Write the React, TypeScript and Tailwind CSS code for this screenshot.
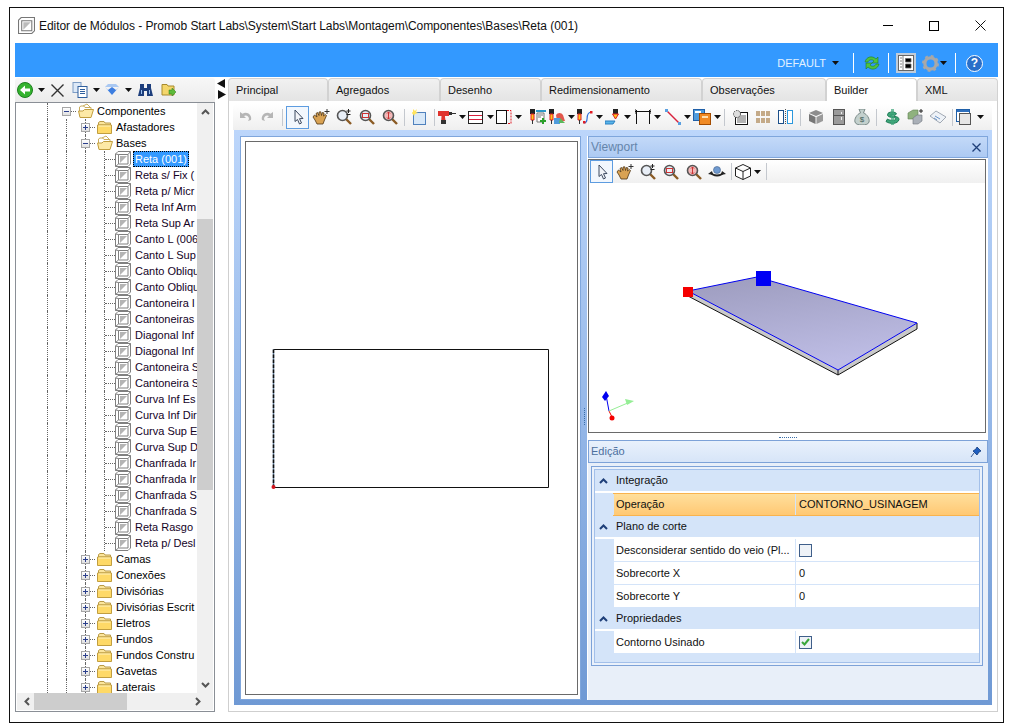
import type { ReactNode } from "react";

const font = { fontFamily: '"Liberation Sans", Arial, sans-serif' };

function Ic({ children, box = "0 0 16 16", className = "h-4 w-4" }: { children: ReactNode; box?: string; className?: string }) {
  return (
    <svg viewBox={box} className={`${className} shrink-0`} fill="none">
      {children}
    </svg>
  );
}

function Caret({ color = "#111" }: { color?: string }) {
  return (
    <svg viewBox="0 0 7 4" className="h-1 w-[7px] shrink-0">
      <path d="M0 0H7L3.5 4Z" fill={color} />
    </svg>
  );
}

function ModuleIcon() {
  return (
    <Ic>
      <path d="M.5 3 3 .5H15.5V13L13 15.5H.5Z" fill="#fff" stroke="#808080" />
      <path d="M3.5 3.5H13V13H3.5Z" fill="#fff" stroke="#808080" />
      <path d="M5 12V5H12Z" fill="#b4b4b4" />
      <path d="M.5 3 3.5 3.5M15.5.5 13 3.5M.5 15.5 3.5 13" stroke="#808080" />
    </Ic>
  );
}

function FolderClosed() {
  return (
    <Ic>
      <path d="M1.5 5V3.5L3 2.5H7L8 4H13.5V6H1.5Z" fill="#fbe59c" stroke="#b99a46" />
      <path d="M.5 6H14.5V14.5H.5Z" fill="#fed967" stroke="#c19e40" />
      <path d="M1.5 7H13.5" stroke="#fff3c0" />
    </Ic>
  );
}

function FolderOpen() {
  return (
    <Ic>
      <path d="M1.5 13V4L3 3H6L7 4.5H13V13Z" fill="#fff" stroke="#c9ac5c" />
      <path d="M5 3 9 1 12 4" stroke="#c9ac5c" fill="#fff" />
      <path d="M.5 8H5L6.5 6.5H15.5L13 14.5H2Z" fill="#fde9a6" stroke="#c19e40" />
    </Ic>
  );
}

function Magnifier({ children, r = "#e8eef6" }: { children?: ReactNode; r?: string }) {
  return (
    <Ic>
      <path d="M10 10 15 15" stroke="#8a5a24" strokeWidth="2.4" />
      <circle cx="6.5" cy="6.5" r="5" fill={r} stroke="#555" strokeWidth="1.6" />
      {children}
    </Ic>
  );
}

function Hand() {
  return (
    <Ic box="0 0 18 16" className="h-4 w-[18px]">
      <path
        d="M1 8 2.5 6 5 8 4 4.5 5.5 3.5 7 6.5 7 3 8.8 2.8 9.5 6.5 10.3 3.5 12 4 11.5 7 13.2 5.5 14.5 6.5 12.5 11 11 15H5L3 11Z"
        fill="#d9a253"
        stroke="#4d3413"
        strokeWidth=".8"
      />
      <path d="M15 0V5M12.5 2.5H17.5" stroke="#333" />
    </Ic>
  );
}

function Cursor() {
  return (
    <Ic>
      <path d="M5 1V12.5L7.5 10.5 9.5 15 11.5 14 9.5 9.7 13 9.5Z" fill="#f2f4f8" stroke="#3d4a60" />
    </Ic>
  );
}

function MachineHead({ x = 1 }: { x?: number }) {
  return (
    <>
      <rect x={x} y="0" width="5" height="5" fill="#222" />
      <path d={`M${x + 1} 5H${x + 4}V11H${x + 1}Z`} fill="#ffc61a" stroke="#e01b24" />
      <path d={`M${x + 2} 11H${x + 3}V15H${x + 2}Z`} fill="#333" />
    </>
  );
}

// ferramentas do builder, uma por botao
const builderIcons = {
  undo: (
    <Ic>
      <path d="M3 3V9H9L7 7C9 5.5 12 7 12 10L11 12 14 11C15.5 6 10 2 5.5 4.7Z" fill="#b6b6b6" />
    </Ic>
  ),
  redo: (
    <Ic>
      <path d="M13 3V9H7L9 7C7 5.5 4 7 4 10L5 12 2 11C.5 6 6 2 10.5 4.7Z" fill="#b6b6b6" />
    </Ic>
  ),
  zoomPlus: (
    <Magnifier>
      <path d="M12.500 0V4M10.500 2H14.500M10.500 5.500H14.500" stroke="#222" />
    </Magnifier>
  ),
  zoomWin: (
    <Magnifier>
      <rect x="3.5" y="4.5" width="6" height="4" stroke="#c33" />
    </Magnifier>
  ),
  zoomAll: (
    <Magnifier r="#f2b9b9">
      <path d="M6.5 3V10M5 4.5 6.5 3 8 4.5M5 8.5 6.5 10 8 8.5" stroke="#c33" />
    </Magnifier>
  ),
  sheet: (
    <Ic>
      <rect x="1.5" y="3.5" width="12" height="12" fill="#d8e8f8" stroke="#4f81bd" />
      <path d="M1 0 3 2 5 0 4 3 6 4 3 5 2 7 1 5-1 4 1 3Z" fill="#ffe45c" />
    </Ic>
  ),
  drill: (
    <Ic box="0 0 18 16" className="h-4 w-[18px]">
      <path d="M0 2H11V7H7V8L8 15H3L3.5 7H0Z" fill="#e0332d" />
      <path d="M3 11H8V15H3Z" fill="#333" />
      <path d="M11 3H14V6H11ZM14 4H18V5H14Z" fill="#333" />
    </Ic>
  ),
  strips: (
    <Ic>
      <rect x=".5" y="2.5" width="14" height="12" fill="#fff" stroke="#222" />
      <path d="M1 6.5H14M1 10.5H14" stroke="#d8203c" />
    </Ic>
  ),
  panel: (
    <Ic>
      <rect x=".5" y="1.5" width="10" height="13" fill="#fff" stroke="#111" />
      <path d="M11 1.5H15V14.5H11" stroke="#e01b24" strokeDasharray="2 1" />
    </Ic>
  ),
  headList: (
    <Ic>
      <MachineHead x={0} />
      <path d="M6 1H16V3H6Z" fill="#2a97c8" />
      <path d="M7 4H14V13H7Z" fill="#fff" stroke="#777" />
      <path d="M8 6H13M8 8H11" stroke="#777" />
      <path d="M12 9H14V11H16V13H14V15H12V13H10V11H12Z" fill="#2aa02a" />
    </Ic>
  ),
  headShape: (
    <Ic>
      <MachineHead x={0} />
      <path d="M7 6A4 4 0 0 1 14 6L16 12H8Z" fill="#e2574c" />
      <path d="M5 9H11V15H5Z" fill="#4f9bdc" />
      <path d="M11 9 16 14H10Z" fill="#5cb85c" />
    </Ic>
  ),
  headCurve: (
    <Ic>
      <MachineHead x={0} />
      <path d="M7 14C13 14 7 4 14 3" stroke="#2f6fdb" strokeWidth="1.2" />
      <rect x="6" y="12" width="2.5" height="2.5" fill="#e01b24" />
      <rect x="13" y="2" width="2.5" height="2.5" fill="#e01b24" />
    </Ic>
  ),
  headFlat: (
    <Ic>
      <rect x="8" y="0" width="5" height="5" fill="#222" />
      <path d="M7.5 5H13.5L10.5 10Z" fill="#ffc61a" stroke="#e01b24" />
      <path d="M0 12H10L8 15H0Z" fill="#59b5ea" stroke="#2a7fc0" />
    </Ic>
  ),
  bracket: (
    <Ic>
      <path d="M1.5 15V1M14.5 15V1M0 2.5H16" stroke="#111" />
      <path d="M0 0V5M16 0V5" stroke="#111" />
    </Ic>
  ),
  line: (
    <Ic>
      <path d="M2 2 14 14" stroke="#d8203c" strokeWidth="1.4" />
      <rect x="0" y="0" width="3" height="3" fill="#5a9fe0" />
      <rect x="13" y="13" width="3" height="3" fill="#5a9fe0" />
    </Ic>
  ),
  layers: (
    <Ic box="0 0 18 16" className="h-4 w-[18px]">
      <rect x=".5" y=".5" width="11" height="11" fill="#4f9bdc" stroke="#1f5fa8" />
      <rect x="2" y="2" width="6" height="2" fill="#fff" />
      <rect x="6.5" y="4.5" width="11" height="11" fill="#f08a24" stroke="#a34c00" />
      <rect x="9" y="7" width="6" height="2" fill="#ffe0b0" />
    </Ic>
  ),
  gearSheet: (
    <Ic>
      <rect x="3.5" y="3.5" width="12" height="12" fill="#fff" stroke="#111" />
      <path d="M5 7H14M5 9H14M5 11H14M5 13H14" stroke="#666" />
      <circle cx="5" cy="5" r="3.5" fill="#ddd" stroke="#444" strokeDasharray="1.5 1" />
    </Ic>
  ),
  bricks: (
    <Ic>
      <path d="M1 2H5V7H1ZM6 2H10V7H6ZM11 2H15V7H11ZM1 9H5V14H1ZM6 9H10V14H6ZM11 9H15V14H11Z" fill="#c4aa88" />
    </Ic>
  ),
  bars: (
    <Ic>
      <rect x=".5" y="1.5" width="5" height="13" fill="#fff" stroke="#1b4f8a" />
      <rect x="9.5" y="1.5" width="5" height="13" fill="#fff" stroke="#2a97dc" />
      <path d="M7.5 0V16" stroke="#555" strokeDasharray="1 1" />
    </Ic>
  ),
  box: (
    <Ic>
      <path d="M8 1 15 4 8 7 1 4Z" fill="#8d8d8d" />
      <path d="M1 5 7.5 8V15L1 12Z" fill="#777" />
      <path d="M15 5 8.5 8V15L15 12Z" fill="#9a9a9a" />
    </Ic>
  ),
  fridge: (
    <Ic>
      <rect x="2.5" y=".5" width="11" height="15" fill="#9b9b9b" stroke="#555" />
      <path d="M3 6.5H13" stroke="#555" />
      <path d="M10.5 3V5M10.5 8V11" stroke="#eee" />
    </Ic>
  ),
  bag: (
    <Ic>
      <path d="M5 0H11L9.5 4C13 5 16 10 15 13 14.5 15 12 16 8 16S1.500 15 1 13C0 10 3 5 6.500 4Z" fill="#c3d0cd" stroke="#7a8a88" />
      <text x="8" y="13" textAnchor="middle" fontSize="8" fill="#44605a" style={font}>
        $
      </text>
    </Ic>
  ),
  dollar: (
    <Ic>
      <path
        d="M12.500 5C12 2.500 4 2 3.500 5.500 3 9.500 12 7.500 12 10 11 12 5 11.500 3.500 10L2 12.500C5 15 14 15.500 15 10.500 15.500 6.500 6.500 8 7 5.800 8 5 10 5.500 10.500 6.500Z"
        fill="#3ea67a"
        stroke="#1d7a54"
      />
      <path d="M7 0H10V16H7Z" fill="#3ea67a" opacity=".7" />
    </Ic>
  ),
  blocks: (
    <Ic>
      <path d="M1 4 6 1H11V7L6 10H1Z" fill="#8fb27e" stroke="#5f7f52" strokeWidth=".6" />
      <path d="M6 9 10 6H15V12L11 15H6Z" fill="#aab0b8" stroke="#70767d" strokeWidth=".6" />
      <path d="M14 0V4M12 2H16" stroke="#222" />
    </Ic>
  ),
  tag: (
    <Ic>
      <path d="M0 7 6 2 16 8 10 14Z" fill="#eef2f7" stroke="#a0a8b3" />
      <path d="M5 7 10 10M4 9 7 11" stroke="#6a94c8" />
    </Ic>
  ),
  windows: (
    <Ic box="0 0 18 16" className="h-4 w-[18px]">
      <rect x=".5" y=".5" width="13" height="12" fill="#fff" stroke="#1f5fa8" />
      <rect x="1" y="1" width="12" height="2" fill="#2d6fbd" />
      <rect x="3.500" y="4.500" width="11" height="11" fill="#e6e6e6" stroke="#555" />
    </Ic>
  ),
  orbit: (
    <Ic box="0 0 18 16" className="h-4 w-[18px]">
      <circle cx="9" cy="6" r="3.500" fill="#6f9ad0" stroke="#3f5f8a" strokeWidth=".6" />
      <path d="M3 8.500C5 12.500 13 12.500 15 8.500" stroke="#222" strokeWidth="1.800" />
      <path d="M0 10 4 7 5 11ZM18 10 14 7 13 11Z" fill="#222" />
    </Ic>
  ),
  cube: (
    <Ic>
      <path d="M8 .5 15.500 4V12L8 15.500 .5 12V4ZM.5 4 8 7.500 15.500 4M8 7.500V15.500" fill="#fff" stroke="#222" />
    </Ic>
  ),
};

function Tool({ icon, w = "w-[23px]", caret, active }: { icon: ReactNode; w?: string; caret?: boolean; active?: boolean }) {
  return (
    <div
      className={`${w} flex h-[23px] shrink-0 items-center ${caret ? "gap-[3px]" : "justify-center"} ${
        active ? "border border-[#5d9ce0] bg-[#f2f7fd]" : ""
      }`}
    >
      {icon}
      {caret && <Caret />}
    </div>
  );
}

function Sep() {
  return (
    <div className="flex h-[23px] w-[7px] shrink-0 justify-center">
      <div className="my-[3px] w-px bg-[#c4c8ce]" />
    </div>
  );
}

function TitleBar() {
  return (
    <div className="flex h-[35px] items-center bg-white pl-[3px]">
      <Ic className="h-[17px] w-[17px]">
        <path d="M.5 3 3 .5H15.500V13L13 15.500H.5Z" fill="#fff" stroke="#777" />
        <path d="M3.500 3.500H13V13H3.500Z" fill="#fff" stroke="#777" />
        <path d="M5 12V5H12Z" fill="#bbb" />
      </Ic>
      <span className="ml-[4px] text-[12px] tracking-[-0.05px] text-[#111]">
        Editor de Módulos - Promob Start Labs\System\Start Labs\Montagem\Componentes\Bases\Reta (001)
      </span>
      <div className="ml-auto mr-[-5px] flex items-center">
        <div className="flex w-[46px] justify-center">
          <div className="h-px w-[10px] bg-black" />
        </div>
        <div className="flex w-[46px] justify-center">
          <div className="h-[10px] w-[10px] border border-black" />
        </div>
        <div className="flex w-[46px] justify-center">
          <svg viewBox="0 0 11 11" className="h-[11px] w-[11px]">
            <path d="M.5.5 10.500 10.500M10.500.5.5 10.500" stroke="#111" />
          </svg>
        </div>
      </div>
    </div>
  );
}

function BlueBar() {
  return (
    <div className="flex h-[34px] items-center justify-end bg-[#3399ff] pt-[6px]">
      <span className="text-[11px] text-[#e3f1ff]">DEFAULT</span>
      <div className="ml-[6px]">
        <Caret />
      </div>
      <div className="ml-[14px] h-[20px] w-px bg-white" />
      <div className="ml-[9px] w-[18px]">
        <svg viewBox="0 0 18 18" className="h-[18px] w-[18px]">
          <path d="M2 8C3 3 9 1 13 5L15 3V9H9L11 7C9 5 6 5.500 5 8Z" fill="#4fc13f" stroke="#1f7d2a" strokeWidth=".6" />
          <path d="M16 10C15 15 9 17 5 13L3 15V9H9L7 11C9 13 12 12.500 13 10Z" fill="#4fc13f" stroke="#1f7d2a" strokeWidth=".6" />
        </svg>
      </div>
      <div className="ml-[7px] h-[20px] w-px bg-white" />
      <div className="ml-[7px] flex h-[20px] w-[20px] items-center justify-center bg-[#c0ccd9]">
        <svg viewBox="0 0 16 16" className="h-4 w-4">
          <rect x=".5" y=".5" width="15" height="15" fill="#fff" stroke="#666" />
          <path d="M5 .5V15.500M7.500 3.500H13V7H7.500ZM7.500 9H13V13H7.500ZM2 3H4M2 6H4M2 9H4M2 12H4" stroke="#666" strokeWidth=".8" />
        </svg>
      </div>
      <div className="ml-[6px] flex items-center gap-px">
        <svg viewBox="0 0 18 18" className="h-[17px] w-[17px]">
          <circle cx="9" cy="9" r="6" fill="none" stroke="#a8a8a8" strokeWidth="3.500" />
          <circle cx="9" cy="9" r="8" fill="none" stroke="#a8a8a8" strokeWidth="2" strokeDasharray="3 3.300" />
        </svg>
        <Caret />
      </div>
      <div className="ml-[8px] h-[20px] w-px bg-white" />
      <div className="ml-[10px] mr-[15px] flex h-[17px] w-[17px] items-center justify-center rounded-full border border-white bg-[#2a6fc9] text-[12px] font-bold leading-none text-white">
        ?
      </div>
    </div>
  );
}

function TreeToolbar() {
  return (
    <div className="flex h-[24px] items-center rounded-t-[3px] bg-gradient-to-b from-[#f7f7f7] to-[#ececec] pl-[2px]">
      <svg viewBox="0 0 16 16" className="h-4 w-4 shrink-0">
        <circle cx="8" cy="8" r="7.500" fill="#35b32f" stroke="#1d7f1f" />
        <path d="M3 8 8 3.500V6.500H13V9.500H8V12.500Z" fill="#fff" />
      </svg>
      <div className="ml-[5px]">
        <Caret />
      </div>
      <svg viewBox="0 0 13 13" className="ml-[6px] h-[13px] w-[13px] shrink-0">
        <path d="M.5.5 12.500 12.500M12.500.5.5 12.500" stroke="#333" strokeWidth="1.400" />
      </svg>
      <svg viewBox="0 0 16 16" className="ml-[8px] h-4 w-4 shrink-0">
        <rect x="1" y=".5" width="8" height="10" fill="#dde9f7" stroke="#7d9cc4" />
        <rect x="6" y="4.500" width="9" height="11" fill="#fff" stroke="#2f5f9e" />
        <path d="M8 7.500H13M8 9.500H13M8 11.500H13" stroke="#2f5f9e" />
      </svg>
      <div className="ml-[5px]">
        <Caret />
      </div>
      <svg viewBox="0 0 14 12" className="ml-[5px] h-[12px] w-[14px] shrink-0">
        <path d="M0 3 3 6 7 3 11 6 14 3 7 11Z" fill="#3d7ee0" />
        <path d="M3 0H11L14 3H0Z" fill="#a9c8f2" />
      </svg>
      <div className="ml-[6px]">
        <Caret />
      </div>
      <svg viewBox="0 0 15 14" className="ml-[6px] h-[14px] w-[15px] shrink-0">
        <path d="M2 1H6V5H9V1H13V5L15 13H9V8H6V13H0L2 5Z" fill="#1d3e7c" />
        <path d="M3 7H4V11H3ZM11 7H12V11H11Z" fill="#9cc2f0" />
      </svg>
      <svg viewBox="0 0 16 16" className="ml-[8px] h-4 w-4 shrink-0">
        <path d="M1 13V2.500H6L7 4H13V13Z" fill="#f4d66b" stroke="#a78a2d" />
        <path d="M8 8H11V6L15 10 11 14V12H8Z" fill="#5dbb3a" stroke="#2f7d22" strokeWidth=".5" />
      </svg>
    </div>
  );
}

function Expander({ open }: { open?: boolean }) {
  return (
    <div className="relative flex h-[9px] w-[9px] items-center justify-center border border-[#a6a6a6] bg-gradient-to-b from-white to-[#e0e0e0]">
      <svg viewBox="0 0 7 7" className="h-[7px] w-[7px]">
        <path d={open ? "M1 3.500H6" : "M1 3.500H6M3.500 1V6"} stroke="#2b3f8c" />
      </svg>
    </div>
  );
}

function Guide() {
  return (
    <div className="flex h-4 w-[19px] shrink-0">
      <div className="ml-[9px] h-full border-l border-dotted border-[#666]" />
    </div>
  );
}

function ExpanderCell({ open, through }: { open?: boolean; through?: boolean }) {
  return (
    <div className="relative flex h-4 w-[19px] shrink-0 items-center pl-[5px]">
      {through && <div className="absolute bottom-0 left-[9px] top-0 border-l border-dotted border-[#666]" />}
      <Expander open={open} />
      <div className="w-[5px] border-t border-dotted border-[#666]" />
    </div>
  );
}

const leaves = [
  "Reta (001)",
  "Reta s/ Fix (",
  "Reta p/ Micr",
  "Reta Inf Arm",
  "Reta Sup Ar",
  "Canto L (006",
  "Canto L Sup",
  "Canto Obliqu",
  "Canto Obliqu",
  "Cantoneira I",
  "Cantoneiras",
  "Diagonal Inf",
  "Diagonal Inf",
  "Cantoneira S",
  "Cantoneira S",
  "Curva Inf Es",
  "Curva Inf Dir",
  "Curva Sup E",
  "Curva Sup D",
  "Chanfrada Ir",
  "Chanfrada Ir",
  "Chanfrada S",
  "Chanfrada S",
  "Reta Rasgo",
  "Reta p/ Desl",
];

const folders = ["Camas", "Conexões", "Divisórias", "Divisórias Escrit", "Eletros", "Fundos", "Fundos Constru", "Gavetas", "Laterais"];

function FolderRow({ name, depth, open }: { name: string; depth: 1 | 2; open?: boolean }) {
  return (
    <div className="flex h-4 items-center whitespace-nowrap text-[11px] leading-4 text-black">
      <div className="w-[21px] shrink-0" />
      <Guide />
      {depth === 2 && <Guide />}
      <ExpanderCell open={open} through={depth === 2} />
      <div className="ml-[2px]">{open ? <FolderOpen /> : <FolderClosed />}</div>
      <span className="ml-[3px]">{name}</span>
    </div>
  );
}

function LeafRow({ name, selected }: { name: string; selected?: boolean }) {
  return (
    <div className="flex h-4 items-center whitespace-nowrap text-[11px] leading-4 text-[#14021f]">
      <div className="w-[21px] shrink-0" />
      <Guide />
      <Guide />
      <Guide />
      <div className="flex h-4 w-[20px] shrink-0 items-center pl-[9px]">
        <div className="h-full border-l border-dotted border-[#666]" />
        <div className="w-[10px] border-t border-dotted border-[#666]" />
      </div>
      <ModuleIcon />
      {selected ? (
        <span className="ml-[2px] h-4 border border-dotted border-black bg-[#3399ff] px-[1px] leading-[14px] text-white">{name}</span>
      ) : (
        <span className="ml-[4px]">{name}</span>
      )}
    </div>
  );
}

function Chevron({ d }: { d: string }) {
  return (
    <svg viewBox="0 0 9 6" className="h-[6px] w-[9px]">
      <path d={d} fill="none" stroke="#555" strokeWidth="2" />
    </svg>
  );
}

function TreePanel() {
  return (
    <div className="flex w-[200px] shrink-0 flex-col">
      <TreeToolbar />
      <div className="flex h-[610px] flex-col border border-[#8a8f96] bg-white px-px pb-px">
        <div className="flex min-h-0 flex-1">
          <div className="min-w-0 flex-1 overflow-hidden">
            <FolderRow name="Componentes" depth={1} open />
            <FolderRow name="Afastadores" depth={2} />
            <FolderRow name="Bases" depth={2} open />
            {leaves.map((name, i) => (
              <LeafRow key={i} name={name} selected={i === 0} />
            ))}
            {folders.map((name) => (
              <FolderRow key={name} name={name} depth={2} />
            ))}
          </div>
          <div className="flex w-[16px] shrink-0 flex-col items-center bg-[#f0f0f0]">
            <div className="flex h-[17px] shrink-0 items-center">
              <Chevron d="M1 5 4.500 1.500 8 5" />
            </div>
            <div className="mt-[99px] h-[271px] w-full shrink-0 bg-[#cdcdcd]" />
            <div className="mt-auto flex h-[17px] shrink-0 items-center">
              <Chevron d="M1 1 4.500 4.500 8 1" />
            </div>
          </div>
        </div>
        <div className="flex h-[17px] shrink-0 items-center bg-[#f0f0f0]">
          <div className="flex w-[17px] justify-center pl-[3px]">
            <svg viewBox="0 0 6 9" className="h-[9px] w-[6px]">
              <path d="M5 1 1.500 4.500 5 8" fill="none" stroke="#555" strokeWidth="2" />
            </svg>
          </div>
          <div className="h-full w-[93px] bg-[#cdcdcd]" />
          <div className="ml-auto flex w-[30px] justify-center">
            <svg viewBox="0 0 6 9" className="h-[9px] w-[6px]">
              <path d="M1 1 4.500 4.500 1 8" fill="none" stroke="#555" strokeWidth="2" />
            </svg>
          </div>
        </div>
      </div>
    </div>
  );
}

const tabs = [
  { label: "Principal", w: "w-[100px]" },
  { label: "Agregados", w: "w-[112px]" },
  { label: "Desenho", w: "w-[101px]" },
  { label: "Redimensionamento", w: "w-[161px]" },
  { label: "Observações", w: "w-[124px]" },
  { label: "Builder", w: "w-[91px]", active: true },
  { label: "XML", w: "w-[81px]" },
];

function Tabs() {
  return (
    <div className="flex h-[23px] shrink-0">
      {tabs.map((t) => (
        <div
          key={t.label}
          className={`${t.w} flex items-center rounded-t-[4px] border border-b-0 border-[#d2d2d2] pl-[7px] text-[11px] text-[#111] ${
            t.active ? "bg-white" : "bg-gradient-to-b from-[#f1f1f1] to-[#e4e4e4]"
          }`}
        >
          {t.label}
        </div>
      ))}
    </div>
  );
}

function BuilderToolbar() {
  const i = builderIcons;
  return (
    <div className="-ml-px flex h-[27px] items-center rounded-t-[4px] bg-gradient-to-b from-white to-[#efefef]">
      <Tool icon={i.undo} />
      <Tool icon={i.redo} />
      <Sep />
      <Tool icon={<Cursor />} active />
      <Tool icon={<Hand />} />
      <Tool icon={i.zoomPlus} />
      <Tool icon={i.zoomWin} />
      <Tool icon={i.zoomAll} />
      <Sep />
      <Tool icon={i.sheet} />
      <Sep />
      <Tool icon={i.drill} w="w-[30px]" caret />
      <Tool icon={i.strips} w="w-[28px]" caret />
      <Tool icon={i.panel} w="w-[30px]" caret />
      <Tool icon={i.headList} />
      <Tool icon={i.headShape} w="w-[28px]" caret />
      <Tool icon={i.headCurve} w="w-[28px]" caret />
      <Tool icon={i.headFlat} w="w-[30px]" caret />
      <Tool icon={i.bracket} w="w-[30px]" caret />
      <Tool icon={i.line} w="w-[28px]" caret />
      <Tool icon={i.layers} w="w-[28px]" caret />
      <Sep />
      <Tool icon={i.gearSheet} />
      <Tool icon={i.bricks} />
      <Tool icon={i.bars} />
      <Sep />
      <Tool icon={i.box} />
      <Tool icon={i.fridge} />
      <Tool icon={i.bag} />
      <Sep />
      <Tool icon={i.dollar} />
      <Tool icon={i.blocks} />
      <Tool icon={i.tag} />
      <Sep />
      <Tool icon={i.windows} w="w-[30px]" caret />
    </div>
  );
}

function DrawingPanel() {
  return (
    <div className="w-[341px] shrink-0 border border-[#7fa6dc] bg-white p-[4px]">
      <div className="h-full w-[333px] border border-[#6a6a6a] bg-white">
        <svg viewBox="0 0 331 552" className="block h-[552px] w-[331px]">
          <path d="M27.500 207.500H302.500V345.500H27.500" fill="none" stroke="#111" />
          <path d="M27.500 207.500V345.500" fill="none" stroke="#6a88a8" strokeWidth="1.500" />
          <path d="M27.500 207.500V345.500" fill="none" stroke="#111" strokeWidth="1.500" strokeDasharray="3.500 1.500" />
          <circle cx="27.500" cy="345" r="2" fill="#d3141c" />
        </svg>
      </div>
    </div>
  );
}

function ViewportDrawing() {
  return (
    <svg viewBox="0 0 396 249" className="block h-[249px] w-[396px]">
      <defs>
        <linearGradient id="slab" x1="0" y1="0" x2="0.35" y2="1">
          <stop offset="0" stopColor="#9c9bbd" />
          <stop offset="1" stopColor="#bdbce4" />
        </linearGradient>
      </defs>
      {/* coordenadas relativas ao corpo do viewport (x-589, y-184) */}
      <path d="M99 108 249 187 328 140V146L249 192 99 113Z" fill="#c9c9c9" />
      <path d="M99 113 249 192 328 146V140M249 187V192" fill="none" stroke="#111" />
      <path d="M99 108 168 94 328 140 249 187Z" fill="url(#slab)" stroke="#0000f0" />
      <rect x="167" y="88" width="15" height="15" fill="#0000f5" />
      <rect x="94" y="104" width="10" height="10" fill="#f50000" />
      <path d="M20 228 17 212" stroke="#0000f0" />
      <path d="M17 208 20 213 16 218 13 214Z" fill="#0000f0" />
      <path d="M20 228 23 234" stroke="#f50000" />
      <circle cx="23" cy="235" r="2.500" fill="#f50000" />
      <path d="M20 228 41 219" stroke="#95ee95" />
      <path d="M45 218 36 216 38 222Z" fill="#95ee95" />
    </svg>
  );
}

function ViewportPanel() {
  const i = builderIcons;
  return (
    <div className="flex h-[298px] shrink-0 flex-col">
      <div className="ml-px flex h-[22px] shrink-0 items-center border border-[#7fa6dc] bg-gradient-to-b from-[#c3d9f8] to-[#adcaf3] pl-[2px] pr-[6px]">
        <span className="text-[12px] text-[#6585ab]">Viewport</span>
        <svg viewBox="0 0 9 9" className="ml-auto h-[9px] w-[9px]">
          <path d="M.5.5 8.500 8.500M8.500.5.5 8.500" stroke="#1f3f79" strokeWidth="1.300" />
        </svg>
      </div>
      <div className="ml-px mt-px h-[274px] w-[398px] border border-[#6a6a6a] bg-white">
        <div className="flex h-[23px] items-center bg-gradient-to-b from-white to-[#f0f0f0] pl-[1px]">
          <Tool icon={<Cursor />} active />
          <Tool icon={<Hand />} />
          <Tool icon={i.zoomPlus} />
          <Tool icon={i.zoomWin} />
          <Tool icon={i.zoomAll} />
          <Tool icon={i.orbit} />
          <Sep />
          <Tool icon={i.cube} w="w-[28px]" caret />
          <Sep />
        </div>
        <ViewportDrawing />
      </div>
    </div>
  );
}

function Category({ label }: { label: string }) {
  return (
    <div className="flex h-[23px] items-center border-b-2 border-white bg-[#d4e4f9]">
      <svg viewBox="0 0 9 6" className="ml-[4px] h-[6px] w-[9px]">
        <path d="M1 5 4.500 1.500 8 5" fill="none" stroke="#1f3f79" strokeWidth="2" />
      </svg>
      <span className="ml-[8px] text-[11px] text-[#111]">{label}</span>
    </div>
  );
}

function PropRow({ label, children, hot }: { label: string; children: ReactNode; hot?: boolean }) {
  return (
    <div className="flex h-[23px] pl-[18px]">
      <div
        className={`flex h-[23px] flex-1 items-center text-[11px] text-[#111] ${
          hot
            ? "border-y border-[#f9b34e] bg-gradient-to-b from-[#ffdf9c] to-[#ffc873]"
            : "border-b border-[#d4e4f9] bg-white"
        }`}
      >
        <div className="flex h-full w-[183px] items-center overflow-hidden whitespace-nowrap border-x border-[#d4e4f9] pl-[2px]">{label}</div>
        <div className="flex flex-1 items-center pl-[3px]">{children}</div>
      </div>
    </div>
  );
}

function Checkbox({ checked }: { checked?: boolean }) {
  return (
    <div className="flex h-[13px] w-[13px] items-center justify-center border border-[#3f5f8a] bg-[#eef2f7]">
      {checked && (
        <svg viewBox="0 0 9 8" className="h-2 w-[9px]">
          <path d="M1 4 3.500 6.500 8 1" fill="none" stroke="#3aa63a" strokeWidth="2" />
        </svg>
      )}
    </div>
  );
}

function EditPanel() {
  return (
    <div className="ml-px flex min-h-0 flex-1 flex-col bg-[#e8eff9]">
      <div className="flex h-[23px] shrink-0 items-center border border-[#7da2d8] bg-gradient-to-b from-[#e9f1fc] to-[#d7e5f8] pl-[2px] pr-[5px]">
        <span className="text-[11px] text-[#4c6f9e]">Edição</span>
        <svg viewBox="0 0 12 12" className="ml-auto h-[12px] w-[12px]">
          <path d="M7 1 11 5 9 6 7 9 3 5 6 3ZM4 7 1 11" fill="#1f5fc0" stroke="#12397a" strokeWidth=".8" />
        </svg>
      </div>
      <div className="ml-[3px] mt-[3px] h-[200px] w-[392px] border border-[#7da2d8] bg-[#eaf1fb] p-[2px]">
        <div className="h-full border border-[#a3c0ea] bg-[#d4e4f9]">
          <Category label="Integração" />
          <PropRow label="Operação" hot>
            CONTORNO_USINAGEM
          </PropRow>
          <Category label="Plano de corte" />
          <PropRow label="Desconsiderar sentido do veio (Pl...">
            <Checkbox />
          </PropRow>
          <PropRow label="Sobrecorte X">0</PropRow>
          <PropRow label="Sobrecorte Y">0</PropRow>
          <Category label="Propriedades" />
          <PropRow label="Contorno Usinado">
            <Checkbox checked />
          </PropRow>
        </div>
      </div>
    </div>
  );
}

function Workspace() {
  return (
    <div className="flex h-[575px] bg-gradient-to-b from-[#bcd6fb] to-[#6f99d4] pb-[5px] pl-[6px] pr-[4px] pt-[6px]">
      <DrawingPanel />
      <div className="flex w-[6px] shrink-0 items-end justify-center pb-[275px]">
        <div className="h-[17px] border-l border-dotted border-[#3a6ea8]" />
      </div>
      <div className="flex w-[401px] shrink-0 flex-col bg-white">
        <ViewportPanel />
        <div className="flex h-[6px] shrink-0 items-center justify-center">
          <div className="w-[18px] border-t border-dotted border-[#3a6ea8]" />
        </div>
        <EditPanel />
      </div>
    </div>
  );
}

export default function App() {
  return (
    <div className="h-[728px] w-[1011px] bg-white pl-[9px] pt-[7px]" style={font}>
      <div className="flex h-[716px] w-[995px] flex-col border border-[#111] bg-white px-[5px]">
        <TitleBar />
        <BlueBar />
        <div className="mt-px flex h-[634px]">
          <TreePanel />
          <div className="flex w-[13px] shrink-0 flex-col items-center gap-[2px] pt-[1px]">
            <svg viewBox="0 0 9 9" className="h-[9px] w-[9px]">
              <path d="M8 0V9L0 4.500Z" fill="#111" />
            </svg>
            <svg viewBox="0 0 9 9" className="h-[9px] w-[9px]">
              <path d="M1 0V9L9 4.500Z" fill="#111" />
            </svg>
          </div>
          <div className="flex w-[770px] shrink-0 flex-col">
            <Tabs />
            <div className="flex h-[611px] flex-col border border-t-0 border-[#cfcfcf] bg-white px-[5px] pb-[6px] pt-[3px]">
              <BuilderToolbar />
              <Workspace />
            </div>
          </div>
        </div>
      </div>
    </div>
  );
}
